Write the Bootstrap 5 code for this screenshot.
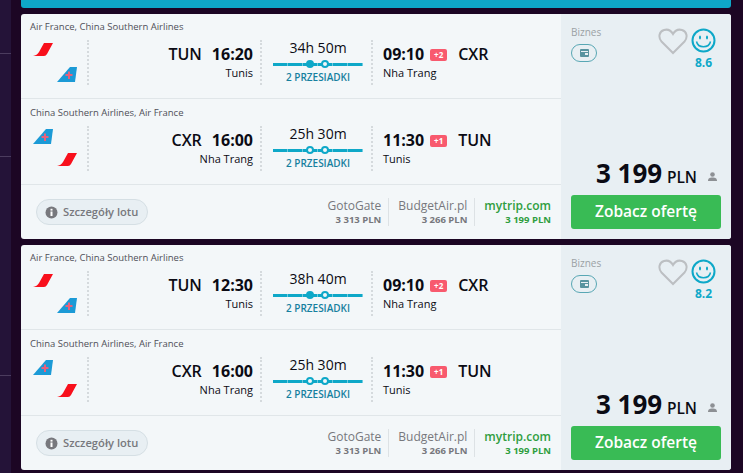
<!DOCTYPE html>
<html lang="pl">
<head>
<meta charset="UTF-8">
<title>Loty</title>
<link href="https://cdn.jsdelivr.net/npm/bootstrap@5.3.0/dist/css/bootstrap.min.css" rel="stylesheet">
<style>
html, body { height: 100%; }
body { background: #1c0624; font-family: "Open Sans", sans-serif; overflow: hidden; color: #0b0b14; }
.page-wrap { width: 743px; height: 473px; overflow: hidden; }
.left-strip { width: 11px; background: #241338; flex: none; padding-top: 53px; }
.left-strip i { display: block; height: 1px; background: #4b3c5e; }
.left-strip i + i { margin-top: 102px; }
.left-strip i + i + i { margin-top: 218px; }
.results { width: 710px; margin-left: 10px; }
.top-bar { height: 8px; background: #0ea8c8; border-radius: 0 0 3px 3px; margin-bottom: 6px; }
.result { height: 225px; margin-bottom: 6px; border-radius: 3px; overflow: hidden; background: #f3f7f9; }
.result-main { width: 540px; flex: none; }
.result-side { width: 170px; flex: none; background: #e8eff3; padding: 11px 10px 10px; }
.leg { height: 85px; border-bottom: 1px solid #e0e6e9; padding: 7px 10px 0 9px; }
.leg + .leg { height: 86px; padding-top: 8px; }
.carriers { font-size: 9.5px; line-height: 12px; color: #4f4f58; margin-bottom: 7px; white-space: nowrap; }
.leg-row { height: 45px; }
.logos { width: 59px; flex: none; height: 45px; border-right: 2px dotted #d5dadd; padding-top: 3px; }
.logos svg { display: block; }
.logo-a { margin-left: 3px; }
.logo-b { margin-left: 27px; margin-top: 9px; }
.depart { width: 173px; flex: none; height: 45px; border-right: 2px dotted #d5dadd; padding-right: 7px; text-align: right; }
.route { width: 111px; flex: none; height: 45px; border-right: 2px dotted #d5dadd; padding: 0 8px 0 11px; text-align: center; }
.arrive { padding-left: 10px; }
.place { font-size: 11px; line-height: 16px; }
.time-line { font-size: 16px; line-height: 22px; font-weight: 600; white-space: nowrap; margin-top: 3px; }
.time-line b { font-weight: 700; font-size: 16px; }
.time-line .code { margin-right: 10px; }
.time-line .code-r { margin-left: 11px; }
.plus-days { display: inline-block; background: #f85a6e; color: #fff; font-size: 8px; line-height: 12px; font-weight: 700; width: 17px; text-align: center; border-radius: 2px; margin-left: 6px; vertical-align: 2px; }
.dur { font-size: 14px; line-height: 16px; }
.dur-line { height: 3px; position: relative; margin: 7px 0 5px; background: repeating-linear-gradient(90deg, #0ea8c8 0 14px, #6fcbdf 14px 15px); }
.stop { position: absolute; top: -3px; width: 8px; height: 8px; border-radius: 50%; border: 2px solid #0ea8c8; background: #f3f7f9; }
.stop.on { background: #0ea8c8; }
.stops-txt { font-size: 10px; line-height: 12px; font-weight: 600; color: #16809f; white-space: nowrap; }
.foot { height: 54px; padding: 0 10px 0 15px; }
.details-btn { width: 112px; height: 26px; border-radius: 13px; background: #e8eff3; border: 1px solid #d5dfe4; font-size: 11.2px; font-weight: 600; color: #77787d; padding: 0 0 0 8px; }
.details-btn span { margin-left: 5px; }
.vendor { text-align: right; padding: 0 7px 0 9px; border-right: 1px solid #dde2e5; color: #77787d; height: 28px; }
.vendor:last-child { border-right: 0; padding-right: 0; }
.vendor div { font-size: 12px; line-height: 16px; white-space: nowrap; }
.vendor span { display: block; font-size: 9.5px; line-height: 12px; font-weight: 700; white-space: nowrap; }
.vendor.best { color: #2f9e3f; }
.vendor.best div { font-weight: 600; }
.cabin { font-size: 10px; line-height: 14px; color: #9ba1a5; }
.cabin-pill { width: 26px; height: 18px; border: 1px solid #58a7b4; border-radius: 9px; margin-top: 5px; }
.rate-box { margin: 3px 5px 0 0; gap: 3px; }
.rate-box svg { margin-top: 1px; }
.rate-box svg:first-child { margin-top: 0; }
.rating { font-size: 12px; line-height: 16px; font-weight: 700; color: #0ea8c8; margin-top: 2px; }
.price { font-size: 26px; line-height: 34px; font-weight: 700; white-space: nowrap; margin-right: 4px; }
.price small { font-size: 15.5px; font-weight: 600; margin-left: -2px; }
.price svg { margin-left: 11px; }
.offer-btn { background: #39bb55; color: #fff; border: 0; border-radius: 3px; height: 34px; width: 150px; font-size: 15.5px; font-weight: 600; padding: 0; margin-top: 1px; }
</style>
</head>
<body>
<div class="page-wrap d-flex">
  <div class="left-strip"><i></i><i></i><i></i></div>
  <div class="results" id="results">
    <div class="top-bar"></div>
  </div>
</div>

<script>
  const afLogo = `<svg width="20" height="15" viewBox="0 0 20 15"><path d="M11 0h9L14 11q-1 2-3 2H0q4-.5 6-4Z" fill="#f8101c"/></svg>`;
  const csLogo = `<svg width="20" height="15" viewBox="0 0 20 15"><path d="M13 0h7l-2 15H0Z" fill="#1b9ad6"/><path d="M11 4.500h2V7h2.500v2H13v3h-2V9H8.500V7H11Z" fill="#e8607c"/></svg>`;

  function leg(carriers, logos, from, fromTime, fromCity, dur, firstOn, to, toTime, plus, toCity) {
    return `
    <div class="leg">
      <div class="carriers">${carriers}</div>
      <div class="leg-row d-flex">
        <div class="logos">
          <div class="logo-a">${logos[0]}</div>
          <div class="logo-b">${logos[1]}</div>
        </div>
        <div class="depart">
          <div class="time-line"><span class="code">${from}</span><b>${fromTime}</b></div>
          <div class="place">${fromCity}</div>
        </div>
        <div class="route">
          <div class="dur">${dur}</div>
          <div class="dur-line">
            <span class="stop ${firstOn ? "on" : ""}" style="left:33px"></span>
            <span class="stop" style="left:48px"></span>
          </div>
          <div class="stops-txt">2 PRZESIADKI</div>
        </div>
        <div class="arrive">
          <div class="time-line"><b>${toTime}</b><span class="plus-days">${plus}</span><span class="code-r">${to}</span></div>
          <div class="place">${toCity}</div>
        </div>
      </div>
    </div>`;
  }

  function offer(o) {
    return `
    <div class="result d-flex">
      <div class="result-main">
        ${leg("Air France, China Southern Airlines", [afLogo, csLogo], "TUN", o.time, "Tunis", o.dur, true, "CXR", "09:10", "+2", "Nha Trang")}
        ${leg("China Southern Airlines, Air France", [csLogo, afLogo], "CXR", "16:00", "Nha Trang", "25h 30m", false, "TUN", "11:30", "+1", "Tunis")}
        <div class="foot d-flex align-items-center justify-content-between">
          <button class="details-btn d-flex align-items-center" type="button">
            <svg width="13" height="13" viewBox="0 0 13 13"><circle cx="6.500" cy="6.500" r="6" fill="#77787d"/><rect x="5.500" y="5.500" width="2" height="4.500" fill="#fff"/><rect x="5.500" y="2.800" width="2" height="1.800" fill="#fff"/></svg>
            <span>Szczegóły lotu</span>
          </button>
          <div class="d-flex">
            <div class="vendor"><div>GotoGate</div><span>3 313 PLN</span></div>
            <div class="vendor"><div>BudgetAir.pl</div><span>3 266 PLN</span></div>
            <div class="vendor best"><div>mytrip.com</div><span>3 199 PLN</span></div>
          </div>
        </div>
      </div>
      <div class="result-side d-flex flex-column">
        <div class="d-flex justify-content-between">
          <div>
            <div class="cabin">Biznes</div>
            <div class="cabin-pill d-flex align-items-center justify-content-center">
              <svg width="9" height="8" viewBox="0 0 9 8"><rect width="9" height="8" rx="1" fill="#58939f"/><rect x="1" y="2" width="7" height="1" fill="#e8eff3"/><rect x="5" y="4" width="3" height="2" fill="#e8eff3"/></svg>
            </div>
          </div>
          <div class="rate-box d-flex">
            <svg width="30" height="27" viewBox="0 0 30 27"><path d="M15 25 3.500 13.500C0 9.500 1 3.500 6 2c3.500-1 7 .5 9 4 2-3.500 5.500-5 9-4 5 1.500 6 7.500 2.500 11.500Z" fill="none" stroke="#bcbfc2" stroke-width="2"/></svg>
            <div class="text-center">
              <svg width="25" height="25" viewBox="0 0 25 25" class="d-block"><circle cx="12.500" cy="12.500" r="11" fill="none" stroke="#0ea8c8" stroke-width="2"/><ellipse cx="9" cy="9.500" rx="1" ry="2" fill="#0ea8c8"/><ellipse cx="16" cy="9.500" rx="1" ry="2" fill="#0ea8c8"/><path d="M5.500 13.500c1.500 7 12.500 7 14 0" fill="none" stroke="#0ea8c8" stroke-width="1.500"/></svg>
              <div class="rating">${o.rating}</div>
            </div>
          </div>
        </div>
        <div class="mt-auto text-end">
          <div class="price">3 199 <small>PLN</small><svg width="9" height="9" viewBox="0 0 9 9"><circle cx="4.500" cy="2.500" r="2.300" fill="#8d9094"/><path d="M0 9c0-3 2-3.500 4.500-3.500S9 6 9 9Z" fill="#8d9094"/></svg></div>
          <button class="offer-btn d-block" type="button">Zobacz ofertę</button>
        </div>
      </div>
    </div>`;
  }

  const offers = [
    { time: "16:20", dur: "34h 50m", rating: "8.6" },
    { time: "12:30", dur: "38h 40m", rating: "8.2" }
  ];
  document.getElementById("results").insertAdjacentHTML("beforeend", offers.map(offer).join(""));
</script>
<script src="https://cdn.jsdelivr.net/npm/bootstrap@5.3.0/dist/js/bootstrap.bundle.min.js"></script>
</body>
</html>
